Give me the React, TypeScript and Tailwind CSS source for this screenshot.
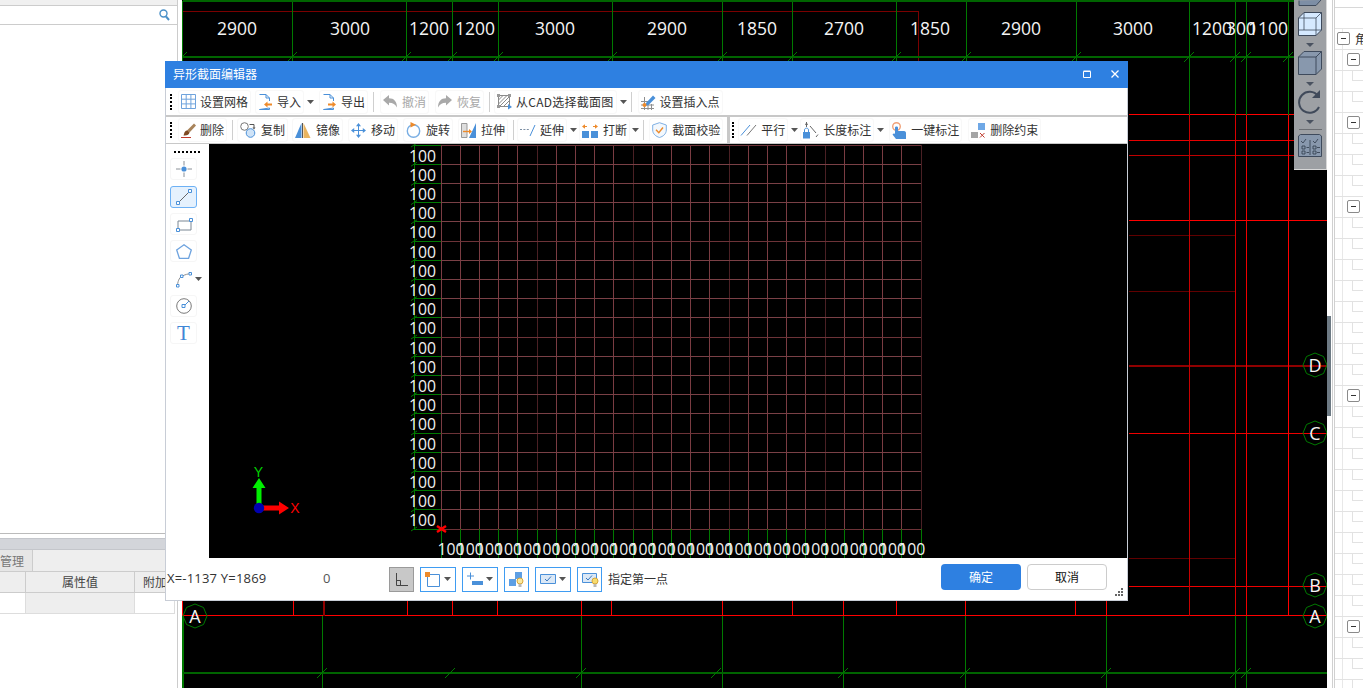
import React from "react";

const R = "#ff0000";
const G = "#007a00";
const BL = "#4a90d9";
const OR = "#ee8a2a";

const Sv = ({ w, h, cls = "", children }: { w: number; h: number; cls?: string; children: React.ReactNode }) => (
  <svg width={w} height={h} viewBox={`0 0 ${w} ${h}`} className={"shrink-0 overflow-visible " + cls} fill="none">
    {children}
  </svg>
);

const Doc = ({ dir }: { dir: "in" | "out" }) => (
  <Sv w={14} h={16}>
    <path d="M1.5 .5H8L11.5 4V7M11.5 14V15.5H1.5Z" stroke={BL} />
    <path d="M8 .5V4H11.5" stroke={BL} />
    {dir === "in" ? (
      <path d="M6 10.5L9.5 7.5V9.5H14V11.5H9.5V13.5Z" fill={OR} />
    ) : (
      <path d="M14 10.5L10.5 7.5V9.5H6V11.5H10.5V13.5Z" fill={OR} />
    )}
  </Sv>
);

const IGrid = () => (
  <Sv w={14} h={15}>
    <path d="M.5 .5H14.5V14.5H.5ZM5.2 .5V14.5M9.9 .5V14.5M.5 5.2H14.5M.5 9.9H14.5" stroke="#6fa3dc" />
  </Sv>
);
const IUndo = ({ flip }: { flip?: boolean }) => (
  <Sv w={14} h={13} cls={flip ? "-scale-x-100" : ""}>
    <path d="M0 5L6 0V3.2C11 3.2 14 6.5 14 12.5C12.5 9.5 10 7.8 6 7.8V10.5Z" fill="#a9a9a9" />
  </Sv>
);
const ICad = () => (
  <Sv w={14} h={15}>
    <path d="M1.5 1.5H12.5V12.5H1.5Z" stroke="#8a8a8a" />
    <path d="M1.5 6L6 1.5M1.5 10L10 1.5M2.5 12.5L12.5 2.5M6.5 12.5L12.5 6.5" stroke="#8a8a8a" />
    <path d="M0 0H3V3H0ZM11 0H14V3H11ZM0 11H3V14H0Z" fill="#9a9a9a" />
    <path d="M11 10L15 13L11 15.5Z" fill={BL} />
  </Sv>
);
const IInsert = () => (
  <Sv w={14} h={16}>
    <path d="M0 7.5H9M0 11H13M0 14.5H13M3.5 3V16M7 7V16M10.5 10V16" stroke="#8e8e8e" />
    <path d="M5 9L12 1.5L14.5 4L7.5 11L4.5 12Z" fill={BL} />
    <circle cx="3.5" cy="11" r="2" fill={OR} />
  </Sv>
);
const IEraser = () => (
  <Sv w={14} h={15}>
    <path d="M6 7.5L13 .5L15 2.5L8.5 9.5Z" fill="#a8835a" />
    <path d="M3 11C3.5 8.5 5 7 6.5 7.5L8.5 9.5C8 11.5 6 13 2.5 12.5Z" fill="#7e4a22" />
    <path d="M0 14.5H10" stroke="#c0392b" />
  </Sv>
);
const ICopy = () => (
  <Sv w={16} h={16}>
    <circle cx="4.5" cy="4.5" r="3.8" stroke="#777" />
    <circle cx="10.5" cy="11" r="4.3" stroke={BL} fill="#cfe3f7" />
    <path d="M9.5 2.5H14V6" stroke="#555" />
    <path d="M12.5 5.5H15.5L14 7.5Z" fill="#555" />
  </Sv>
);
const IMirror = () => (
  <Sv w={16} h={15}>
    <path d="M6.5 0V15H0Z" fill={BL} />
    <path d="M8.5 0L15.5 15H8.5Z" fill="#e9b45f" />
    <path d="M7.5 0V15" stroke="#555" />
  </Sv>
);
const IMove = () => (
  <Sv w={15} h={15}>
    <path d="M7.5 3V12M3 7.5H12" stroke={BL} />
    <path d="M7.5 0L10 3.2H5ZM7.5 15L10 11.8H5ZM0 7.5L3.2 5V10ZM15 7.5L11.8 5V10Z" fill={BL} />
  </Sv>
);
const IRotate = () => (
  <Sv w={15} h={16}>
    <circle cx="7.5" cy="9" r="6.2" stroke="#79aee3" strokeWidth="1.4" />
    <path d="M4.5 0L10 2.8L4.5 5.5Z" fill={OR} />
  </Sv>
);
const IStretch = () => (
  <Sv w={15} h={15}>
    <path d="M.5 .5H6V14.5H.5Z" stroke="#999" fill="#dedede" />
    <path d="M15 0V15H8Z" fill={BL} />
    <path d="M2 8.5H9" stroke={OR} strokeWidth="1.4" />
    <path d="M8 6L11 8.5L8 11Z" fill={OR} />
  </Sv>
);
const IExtend = () => (
  <Sv w={15} h={13}>
    <path d="M0 5.5H9" stroke="#7b8ea3" strokeDasharray="2 1.4" />
    <path d="M10 12L15 1" stroke={BL} />
  </Sv>
);
const IBreak = () => (
  <Sv w={16} h={15}>
    <path d="M0 8H7V15H0ZM9 8H16V15H9Z" fill={BL} />
    <path d="M1 3.5H5M11 3.5H15" stroke={OR} />
    <path d="M0 3.5L3 1.3V5.7ZM16 3.5L13 1.3V5.7Z" fill={OR} />
  </Sv>
);
const IShield = () => (
  <Sv w={15} h={16}>
    <path d="M7.5 .7L14.3 3V8C14.3 12 11 14.5 7.5 15.5C4 14.5 .7 12 .7 8V3Z" stroke="#7fb0e4" fill="#f3f8fd" />
    <path d="M4 7.8L6.8 10.7L11 5.5" stroke={OR} strokeWidth="1.4" />
  </Sv>
);
const IParallel = () => (
  <Sv w={15} h={12}>
    <path d="M0 11.5L9 1" stroke={BL} />
    <path d="M6 11.5L15 1" stroke="#777" />
  </Sv>
);
const ILength = () => (
  <Sv w={15} h={17}>
    <rect x="0" y="10" width="7" height="6.5" fill={BL} />
    <path d="M1.5 10V8C1.5 5.5 5.5 5.5 5.5 8V10" stroke={BL} />
    <path d="M3.5 0V5M7 4L13 11" stroke="#666" />
    <path d="M13 15L15 12.5" stroke="#666" />
    <path d="M2 3L3.5 0L5 3Z" fill="#666" />
  </Sv>
);
const IHand = () => (
  <Sv w={14} h={17}>
    <circle cx="4.5" cy="4.5" r="3.8" stroke="#f0a27a" strokeWidth="1.4" />
    <path d="M3 5.5C3 4 6 4 6 5.5V9H12C13.5 9 14 10 14 11V17H4L.5 12.5L2 11.2L3 12Z" fill={BL} />
  </Sv>
);
const IDelCon = () => (
  <Sv w={14} h={15}>
    <path d="M0 9H7V15H0Z" fill="#a5a5a5" />
    <path d="M7 0H14V7H7Z" fill="#6fa8e6" />
    <path d="M9 10L13.5 14.5M13.5 10L9 14.5" stroke="#c0392b" />
  </Sv>
);

const Caret = ({ cls = "" }: { cls?: string }) => (
  <svg width="7" height="4" viewBox="0 0 7 4" className={"shrink-0 " + cls}>
    <path d="M0 0H7L3.5 4Z" fill="#555" />
  </svg>
);
const Sep = ({ cls = "" }: { cls?: string }) => <div className={"w-px h-[20px] bg-[#cfcfcf] shrink-0 " + cls} />;
const Grip = ({ cls = "" }: { cls?: string }) => (
  <div className={"h-[16px] w-[2px] border-l-2 border-dotted border-black shrink-0 " + cls} />
);

const Btn = ({
  cls = "",
  icon,
  label,
  dim,
  labelCls = "",
}: {
  cls?: string;
  icon: React.ReactNode;
  label: string;
  dim?: boolean;
  labelCls?: string;
}) => (
  <div
    className={
      "h-[24px] px-[2px] border border-[#f8f8f8] flex items-center gap-[5px] rounded-[3px] shrink-0 whitespace-nowrap " +
      (dim ? "text-[#a8a8a8] " : "text-[#333333] ") +
      cls
    }
  >
    {icon}
    <span className={labelCls}>{label}</span>
  </div>
);

const ToolCell = ({ cls = "", active, children }: { cls?: string; active?: boolean; children: React.ReactNode }) => (
  <div
    className={
      "w-[27px] h-[22px] shrink-0 rounded-[3px] flex items-center justify-center border " +
      (active ? "bg-[#e5f1fd] border-[#6db1f5] " : "bg-white border-[#f6f6f6] ") +
      cls
    }
  >
    {children}
  </div>
);

const StatBtn = ({ cls = "", children, caret }: { cls?: string; children: React.ReactNode; caret?: boolean }) => (
  <div
    className={
      "h-[25px] ml-[6px] shrink-0 bg-white border border-[#3f9cf2] flex items-center pl-[4px] " +
      (caret ? "w-[36px] justify-between pr-[4px] " : "w-[25px] ") +
      cls
    }
  >
    {children}
    {caret && <Caret />}
  </div>
);

const Dialog = () => {
  const rows = Array.from({ length: 21 }, (_, i) => 145 + i * 19.2);
  const cols = Array.from({ length: 26 }, (_, i) => 441 + i * 19.2);
  return (
    <div className="absolute left-[165px] top-[61px] w-[963px] h-[540px] flex flex-col text-[12px] font-['Noto_Sans_CJK_SC','Noto_Sans',sans-serif]">
      <div className="h-[27px] bg-[#2e80e1] flex items-center pl-[8px] pb-[1px] text-white shrink-0">
        <span>异形截面编辑器</span>
        <div className="ml-auto mr-[9px] flex items-center gap-[20px]">
          <Sv w={8} h={8}>
            <path d="M.5 1.5H7.5V7.5H.5ZM.5 1H7.5" stroke="white" />
          </Sv>
          <Sv w={8} h={8}>
            <path d="M.5 .5L7.5 7.5M7.5 .5L.5 7.5" stroke="white" strokeWidth="1.3" />
          </Sv>
        </div>
      </div>
      <div className="flex-1 flex flex-col border-x border-b border-[#c8cdd6] bg-white">
        <div className="h-[27px] flex items-center shrink-0">
          <Grip cls="ml-[4px]" />
          <Btn cls="ml-[6px]" icon={<IGrid />} label="设置网格" />
          <Btn cls="ml-[4px]" icon={<Doc dir="in" />} label="导入" />
          <Caret cls="ml-[3px]" />
          <Btn cls="ml-[5px]" icon={<Doc dir="out" />} label="导出" />
          <Sep cls="ml-[5px]" />
          <Btn cls="ml-[6px]" dim icon={<IUndo />} label="撤消" />
          <Btn cls="ml-[6px]" dim icon={<IUndo flip />} label="恢复" />
          <Sep cls="ml-[5px]" />
          <Btn cls="ml-[4px]" icon={<ICad />} label="从CAD选择截面图" labelCls="tracking-[0.25px]" />
          <Caret cls="ml-[3px]" />
          <Sep cls="ml-[4px]" />
          <Btn cls="ml-[6px]" icon={<IInsert />} label="设置插入点" />
        </div>
        <div className="h-[2px] bg-[#c8c8c8] shrink-0" />
        <div className="h-[26px] flex items-center shrink-0">
          <Grip cls="ml-[4px]" />
          <Btn cls="ml-[6px]" icon={<IEraser />} label="删除" />
          <Sep cls="ml-[5px]" />
          <Btn cls="ml-[4px]" icon={<ICopy />} label="复制" />
          <Btn cls="ml-[4px]" icon={<IMirror />} label="镜像" />
          <Btn cls="ml-[5px]" icon={<IMove />} label="移动" />
          <Btn cls="ml-[5px]" icon={<IRotate />} label="旋转" />
          <Btn cls="ml-[5px]" icon={<IStretch />} label="拉伸" />
          <Sep cls="ml-[5px]" />
          <Btn cls="ml-[3px]" icon={<IExtend />} label="延伸" />
          <Caret cls="ml-[3px]" />
          <Btn cls="ml-[2px]" icon={<IBreak />} label="打断" />
          <Caret cls="ml-[2px]" />
          <Sep cls="ml-[4px]" />
          <Btn cls="ml-[5px]" icon={<IShield />} label="截面校验" />
          <div className="ml-[4px] w-[3px] h-full bg-[#c8c8c8] shrink-0" />
          <Grip cls="ml-[2px]" />
          <Btn cls="ml-[4px]" icon={<IParallel />} label="平行" />
          <Caret cls="ml-[3px]" />
          <Btn cls="ml-[2px]" icon={<ILength />} label="长度标注" />
          <Caret cls="ml-[3px]" />
          <Btn cls="ml-[5px]" icon={<IHand />} label="一键标注" />
          <Btn cls="ml-[6px]" icon={<IDelCon />} label="删除约束" />
        </div>
        <div className="h-px bg-[#c8c8c8] shrink-0" />
        <div className="h-[414px] flex shrink-0">
          <div className="w-[43px] flex flex-col pl-[4px] shrink-0 bg-white relative">
            <div className="mt-[7px] ml-[4px] w-[26px] border-t-2 border-dotted border-black" />
            <ToolCell cls="mt-[5px]">
              <Sv w={16} h={16}>
                <path d="M0 8H4.5M11.5 8H16M8 0V4.5M8 11.5V16" stroke="#8a9097" />
                <circle cx="8" cy="8" r="2.6" fill={BL} />
              </Sv>
            </ToolCell>
            <ToolCell cls="mt-[6px]" active>
              <Sv w={16} h={16}>
                <path d="M2 14L14 2" stroke="#666" />
                <path d="M.5 12.5H3.5V15.5H.5ZM12.5 .5H15.5V3.5H12.5Z" stroke={BL} fill="white" />
              </Sv>
            </ToolCell>
            <ToolCell cls="mt-[5px]">
              <Sv w={16} h={13}>
                <path d="M2 3H15V12H2Z" stroke="#7b8794" />
                <path d="M.5 10.5H3.5V13.5H.5ZM13.5 .5H16.5V3.5H13.5Z" stroke={BL} fill="white" />
              </Sv>
            </ToolCell>
            <ToolCell cls="mt-[5px]">
              <Sv w={16} h={15}>
                <path d="M8 .8L15.3 6L12.6 14.3H3.4L.7 6Z" stroke="#6ea3df" strokeWidth="1.3" />
              </Sv>
            </ToolCell>
            <ToolCell cls="mt-[6px] border-transparent">
              <Sv w={16} h={15}>
                <path d="M1.5 13C2 8 4 5 6 4.2C9 2.5 12 2 14.5 1.5" stroke="#8f8f8f" />
                <path d="M.5 12.5H3V15H.5ZM4.5 3H7V5.5H4.5ZM13 .5H15.5V3H13Z" stroke={BL} fill="white" />
              </Sv>
            </ToolCell>
            <div className="absolute left-[29px] top-[133px]">
              <Caret />
            </div>
            <ToolCell cls="mt-[5px]">
              <Sv w={16} h={16}>
                <circle cx="8" cy="8" r="7.3" stroke="#7a7a7a" />
                <path d="M8 8L13 3" stroke={BL} />
                <path d="M6 6.5H9V9.5H6Z" stroke={BL} fill="white" />
              </Sv>
            </ToolCell>
            <ToolCell cls="mt-[5px]">
              <span className="text-[21px] leading-none text-[#3f86d6] font-['Liberation_Serif',serif]">T</span>
            </ToolCell>
          </div>
          <div className="flex-1 bg-black">
            <svg viewBox="209 144 918 414" className="block w-[918px] h-[414px]" fill="none">
              <g shapeRendering="crispEdges">
                {cols.map((x, i) => (
                  <line key={i} x1={x} y1={145} x2={x} y2={529} stroke={i % 5 === 0 && i > 0 ? "#4a2024" : "#7a3c42"} />
                ))}
                {rows.map((y, i) => (
                  <line key={i} x1={441} y1={y} x2={921} y2={y} stroke={i % 5 === 0 ? "#6d3338" : "#7a4046"} />
                ))}
                {rows.map((y, i) => (
                  <line key={i} x1={414} y1={y} x2={441} y2={y} stroke={G} />
                ))}
                {cols.map((x, i) => (
                  <line key={i} x1={x} y1={529} x2={x} y2={558} stroke={G} />
                ))}
                <line x1={414} y1={145} x2={414} y2={529} stroke={G} />
              </g>
              {rows.map((y, i) => (
                <path key={i} d={`M${411} ${y + 2}L${417} ${y - 2}`} stroke={G} />
              ))}
              <g fill="#f2f2f2" fontFamily="'Open Sans',sans-serif" fontSize="16.5">
                {rows.slice(0, 20).map((y, i) => (
                  <text key={i} x={409} y={y + 16.5} textLength={27} lengthAdjust="spacingAndGlyphs">
                    100
                  </text>
                ))}
                {cols.slice(0, 25).map((x, i) => (
                  <text key={i} x={x - 3.5} y={555} textLength={27} lengthAdjust="spacingAndGlyphs">
                    100
                  </text>
                ))}
              </g>
              <path d="M437 526L446 532M446 526L437 532" stroke={R} strokeWidth="2.4" />
              <path d="M256.5 508V488H252.5L259 478L265.5 488H261.5V508Z" fill="#00ee00" />
              <path d="M259 505.5H279V501.5L289 508L279 514.5V510.5H259Z" fill={R} />
              <circle cx="259" cy="508" r="5.2" fill="#0000b0" />
              <text x={258.5} y={477} textAnchor="middle" fill="#00d000" fontFamily="'Liberation Sans',sans-serif" fontSize="14">
                Y
              </text>
              <text x={295} y={513} textAnchor="middle" fill={R} fontFamily="'Liberation Sans',sans-serif" fontSize="14">
                X
              </text>
            </svg>
          </div>
        </div>
        <div className="flex-1 flex items-center relative bg-white text-[#333333]">
          <span className="w-[156px] ml-px shrink-0 whitespace-nowrap text-[13px] tracking-[0.2px] font-['Open_Sans',sans-serif]">X=-1137 Y=1869</span>
          <span className="w-[60px] shrink-0 text-[#555555] text-[13px] font-['Open_Sans',sans-serif]">0</span>
          <div className="w-[25px] h-[25px] ml-[6px] shrink-0 bg-[#c8c8c8] border border-[#9a9a9a] flex items-center justify-center">
            <Sv w={13} h={13}>
              <path d="M1.5 0V12.5H13M1.5 7.5H5.5V12.5" stroke="#444" />
            </Sv>
          </div>
          <StatBtn caret>
            <Sv w={15} h={15}>
              <path d="M2.5 2.5H14.5V14.5H2.5Z" stroke={BL} />
              <path d="M0 0H5V5H0Z" fill={OR} />
            </Sv>
          </StatBtn>
          <StatBtn caret>
            <Sv w={16} h={15}>
              <path d="M0 4H7M3.5 .5V7.5" stroke={BL} />
              <path d="M5 9H16V13H5Z" fill={BL} />
            </Sv>
          </StatBtn>
          <StatBtn>
            <Sv w={16} h={15}>
              <path d="M0 7H7V14H0ZM6 0H13V7H6Z" fill="#5d9fe4" />
              <circle cx="11" cy="9" r="3" fill="#fbe9a0" stroke="#d6a63a" />
              <path d="M9.5 12H12.5V15H9.5Z" fill="#b9b9b9" />
            </Sv>
          </StatBtn>
          <StatBtn caret>
            <Sv w={16} h={12}>
              <path d="M.5 1.5H15.5V10.5H.5Z" stroke={BL} fill="#dbe8f6" />
              <path d="M5 6L7 8L11 3.5" stroke="#3b78bd" />
            </Sv>
          </StatBtn>
          <StatBtn>
            <Sv w={16} h={15}>
              <path d="M.5 1.5H14.5V10.5H.5Z" stroke={BL} fill="#dbe8f6" />
              <path d="M4 6L6 8L10 3.5" stroke="#3b78bd" />
              <circle cx="13" cy="9" r="3" fill="#f7dc6f" stroke="#d6a63a" />
              <path d="M11.5 12H14.5V15H11.5Z" fill="#b9b9b9" />
            </Sv>
          </StatBtn>
          <span className="ml-[6px] shrink-0 whitespace-nowrap">指定第一点</span>
          <div className="ml-auto mb-[4px] w-[80px] h-[26px] rounded-[4px] bg-[#2e80e1] text-white flex items-center justify-center shrink-0">
            确定
          </div>
          <div className="ml-[6px] mr-[20px] mb-[4px] w-[80px] h-[26px] rounded-[4px] bg-white border border-[#cccccc] text-[#111111] flex items-center justify-center shrink-0">
            取消
          </div>
          <svg className="absolute right-[4px] bottom-[4px]" width="8" height="8" viewBox="0 0 8 8">
            <path d="M6 0H8V2H6ZM3 3H5V5H3ZM6 3H8V5H6ZM0 6H2V8H0ZM3 6H5V8H3ZM6 6H8V8H6Z" fill="#666" />
          </svg>
        </div>
      </div>
    </div>
  );
};

const CadBackground = () => {
  const dims: [number, string][] = [
    [237, "2900"], [350, "3000"], [429, "1200"], [475, "1200"], [555, "3000"], [667, "2900"], [757, "1850"],
    [844, "2700"], [930, "1850"], [1021, "2900"], [1133, "3000"], [1212, "1200"], [1241, "300"], [1268, "1100"],
  ];
  const topX = [182, 292, 406, 452, 498, 612, 722, 792, 896, 966, 1076, 1189, 1235, 1246, 1288];
  const botX = [322, 581, 722, 843, 965, 1106, 1235, 1246];
  const tickBot = [322, 450, 581, 716, 843, 965, 1106, 1235, 1246];
  const redStub = [293, 407, 452, 497, 581, 611, 722, 792, 843, 896, 965, 1075, 1106];
  const hept = (cx: number, cy: number) =>
    Array.from({ length: 8 }, (_, i) => {
      const a = -Math.PI / 2 + (i * Math.PI * 2) / 8;
      return `${(cx + 12 * Math.cos(a)).toFixed(1)},${(cy + 12 * Math.sin(a)).toFixed(1)}`;
    }).join(" ");
  const axes: [number, number, string][] = [
    [195, 616, "A"], [1315, 616, "A"], [1315, 585, "B"], [1315, 433, "C"], [1315, 365, "D"],
  ];
  return (
    <svg viewBox="182 0 1145 688" className="block w-[1145px] h-[688px]" fill="none">
      <g shapeRendering="crispEdges" transform="translate(.5 .5)">
        <path d="M182 11H918V61" stroke="#7a0000" />
        {[[114, "#ff0000"], [140, "#e80000"], [155, "#c00000"], [220, "#ff0000"], [433, "#ee0000"], [586, "#ee0000"]].map(([y, c]) => (
          <line key={y as number} x1={1128} y1={y as number} x2={1327} y2={y as number} stroke={c as string} />
        ))}
        <line x1={1128} y1={365} x2={1327} y2={365} stroke="#8f0000" strokeWidth="2" />
        {[235, 291, 558].map((y) => (
          <line key={y} x1={1128} y1={y} x2={1235} y2={y} stroke="#600000" />
        ))}
        <line x1={182} y1={615} x2={1327} y2={615} stroke={R} />
        {redStub.map((x) => (
          <line key={x} x1={x} y1={600} x2={x} y2={615} stroke={R} />
        ))}
        <line x1={323} y1={600} x2={323} y2={615} stroke="#8f0000" strokeWidth="2" />
        <line x1={1189} y1={114} x2={1189} y2={615} stroke="#c80000" />
        <line x1={1235} y1={114} x2={1235} y2={615} stroke="#d80000" />
        <line x1={1246} y1={114} x2={1246} y2={615} stroke="#f00000" />
        <line x1={1288} y1={114} x2={1288} y2={615} stroke={R} />
        <line x1={182} y1={600} x2={182} y2={615} stroke={R} />
        {topX.map((x) => (
          <line key={x} x1={x} y1={0} x2={x} y2={114} stroke={G} />
        ))}
        {botX.map((x) => (
          <line key={x} x1={x} y1={615} x2={x} y2={688} stroke={G} />
        ))}
        <line x1={182} y1={615} x2={182} y2={688} stroke={G} strokeWidth="2" />
        <line x1={182} y1={0} x2={1327} y2={0} stroke="#006400" strokeWidth="2" />
        <line x1={182} y1={56} x2={1327} y2={56} stroke="#006400" strokeWidth="2" />
        <line x1={182} y1={672} x2={1327} y2={672} stroke="#006400" strokeWidth="2" />
      </g>
      {topX.map((x) => (
        <path key={x} d={`M${x - 5} ${62}L${x + 5} ${52}`} stroke={G} />
      ))}
      {tickBot.map((x) => (
        <path key={x} d={`M${x - 5} ${678}L${x + 5} ${668}`} stroke={G} />
      ))}
      <g fill="#f4f4f4" fontFamily="'Open Sans',sans-serif" fontSize="17.5" textAnchor="middle">
        {dims.map(([x, t]) => (
          <text key={x} x={x} y={35}>
            {t}
          </text>
        ))}
      </g>
      {axes.map(([x, y, t]) => (
        <g key={`${x}${y}`}>
          <polygon points={hept(x, y)} stroke={G} />
          <text x={x} y={y + 6.5} textAnchor="middle" fill="#f4f4f4" fontFamily="'Open Sans',sans-serif" fontSize="18">
            {t}
          </text>
        </g>
      ))}
    </svg>
  );
};

const FloatBar = () => (
  <div className="absolute right-0 top-0 w-[33px] h-[170px] bg-[#9da0a4] border-b border-r border-[#d8d8d8] flex flex-col items-center">
    <div className="h-[6px] w-[24px] overflow-hidden relative">
      <svg width="24" height="6" viewBox="0 0 24 6" className="block" fill="none">
        <path d="M1 .5V5.5H18L23 0" stroke="#3e4a5c" fill="#7d8ea5" />
      </svg>
    </div>
    <svg width="24" height="24" viewBox="0 0 24 24" className="mt-[6px] shrink-0" fill="none">
      <path d="M.5 6L6 .5H23.5V18L18 23.5H.5Z" fill="#d5e9ff" stroke="#3e4a5c" />
      <path d="M.5 6H18V23.5M18 6L23.5 .5M6 .5V18H.5M6 18H23.5" stroke="#3e4a5c" strokeWidth=".8" />
    </svg>
    <div className="mt-[7px] w-0 h-0 border-x-[4px] border-t-[4px] border-x-transparent border-t-[#4a5260]" />
    <svg width="24" height="24" viewBox="0 0 24 24" className="mt-[4px] shrink-0" fill="none">
      <path d="M.5 6L6 .5H23.5V18L18 23.5H.5Z" fill="#8898ad" stroke="#3e4a5c" />
      <path d="M.5 6H18V23.5M18 6L23.5 .5" stroke="#3e4a5c" />
    </svg>
    <div className="mt-[7px] w-0 h-0 border-x-[4px] border-t-[4px] border-x-transparent border-t-[#4a5260]" />
    <svg width="24" height="24" viewBox="0 0 24 24" className="mt-[4px] shrink-0" fill="none">
      <path d="M21 17A10.5 10.5 0 1 1 20 6" stroke="#404a5a" strokeWidth="2" />
      <path d="M14 8H22V0Z" fill="#404a5a" />
    </svg>
    <div className="mt-[6px] w-0 h-0 border-x-[4px] border-t-[4px] border-x-transparent border-t-[#4a5260]" />
    <div className="mt-[5px] w-[23px] h-px bg-[#6b6e73]" />
    <svg width="24" height="23" viewBox="0 0 24 23" className="mt-[4px] shrink-0" fill="none">
      <path d="M.5 2L2.5 .5H21.5L23.5 2V22.5H.5Z" fill="#8898ad" stroke="#3e4a5c" />
      <path d="M12 6V21M3 7L5 9L8 5M15 7L17 9L20 5M4 12H7V15H4ZM4 17H7V20H4ZM15 12H18V15H15ZM15 17H18V20H15ZM8.5 13.5H11M8.5 18.5H11M19 13.5H22M19 18.5H22" stroke="#2f3a4a" strokeWidth=".8" />
    </svg>
  </div>
);

const Minus = ({ cls }: { cls: string }) => (
  <div className={"absolute w-[13px] h-[13px] bg-white border border-[#8a8a8a] rounded-[2px] flex items-center justify-center top-[3px] " + cls}>
    <div className="w-[5px] h-px bg-[#333]" />
  </div>
);

const RightPanel = () => {
  const boxes = [2, 5, 9, 18, 29];
  return (
    <div className="w-[36px] h-[688px] shrink-0 bg-white relative overflow-hidden flex">
      <div className="w-[6px] shrink-0 border-r border-[#d0d0d0]" />
      <div className="flex-1 border-l border-[#d0d0d0] ml-px flex flex-col">
        <div className="h-[8px] shrink-0 border-b border-[#d8d8d8]" />
        {Array.from({ length: 33 }, (_, i) => {
          const box = boxes.includes(i);
          if (i === 0) return <div key={i} className="h-[21px] shrink-0 border-b border-[#e2e2e2]" />;
          return (
            <div key={i} className="h-[21px] shrink-0 border-b border-[#e2e2e2] flex relative">
              <div className="w-[8px] border-r border-[#e8e8e8] shrink-0" />
              {i === 1 ? (
                <>
                  <Minus cls="left-[2px]" />
                  <span className="ml-[12px] text-[12px] leading-[20px] text-[#333] font-['Noto_Sans_CJK_SC',sans-serif] whitespace-nowrap">角</span>
                </>
              ) : box ? (
                <Minus cls="left-[12px]" />
              ) : (
                <div className="ml-[9px] w-full h-[10px] border-b border-l border-[#e2e2e2]" />
              )}
            </div>
          );
        })}
      </div>
      <div className="absolute left-0 top-[316px] w-[4px] h-[100px] bg-[#6d7a84]" />
    </div>
  );
};

const LeftPanel = () => (
  <div className="w-[182px] h-[688px] shrink-0 bg-white">
    <div className="w-[178px] h-full border-r border-[#cccccc] flex flex-col text-[12px] font-['Noto_Sans_CJK_SC',sans-serif]">
      <div className="h-[5px] bg-[#f0f0f0] border-b border-[#cccccc] shrink-0 box-content" />
      <div className="h-[18px] border-b border-[#cccccc] flex items-center justify-end pr-[7px] shrink-0 box-content">
        <svg width="11" height="12" viewBox="0 0 11 12" fill="none">
          <circle cx="4.5" cy="4.5" r="3.5" stroke="#4a90c8" strokeWidth="1.4" />
          <path d="M7 7.5L10 11" stroke="#4a90c8" strokeWidth="2" />
        </svg>
      </div>
      <div className="h-[509px] border-b border-[#bbbbbb] shrink-0" />
      <div className="h-[4px] shrink-0" />
      <div className="h-[12px] bg-[#d3d5da] border-y border-[#c4c6cb] shrink-0" />
      <div className="h-[22px] bg-[#eeeeee] border-b border-[#cccccc] shrink-0 flex">
        <div className="w-[33px] bg-[#e6e6e6] border-r border-[#cccccc] text-[#777777] leading-[21px] text-left">管理</div>
      </div>
      <div className="h-[21px] bg-[#eeeeee] border-b border-[#cccccc] shrink-0 flex text-[#444444] leading-[20px] mr-[2px]">
        <div className="w-[26px] border-r border-[#cccccc]" />
        <div className="w-[109px] border-r border-[#cccccc] text-center">属性值</div>
        <div className="pl-[8px]">附加</div>
      </div>
      <div className="h-[21px] border-b border-r border-[#dddddd] shrink-0 flex mr-[2px]">
        <div className="w-[26px] border-r border-[#dddddd]" />
        <div className="w-[109px] bg-[#eeeeee] border-r border-[#dddddd]" />
      </div>
    </div>
  </div>
);

export default function App() {
  return (
    <div className="w-[1363px] h-[688px] relative overflow-hidden flex bg-white">
      <LeftPanel />
      <div className="w-[1145px] h-[688px] shrink-0 bg-black relative">
        <CadBackground />
        <FloatBar />
      </div>
      <RightPanel />
      <Dialog />
    </div>
  );
}
